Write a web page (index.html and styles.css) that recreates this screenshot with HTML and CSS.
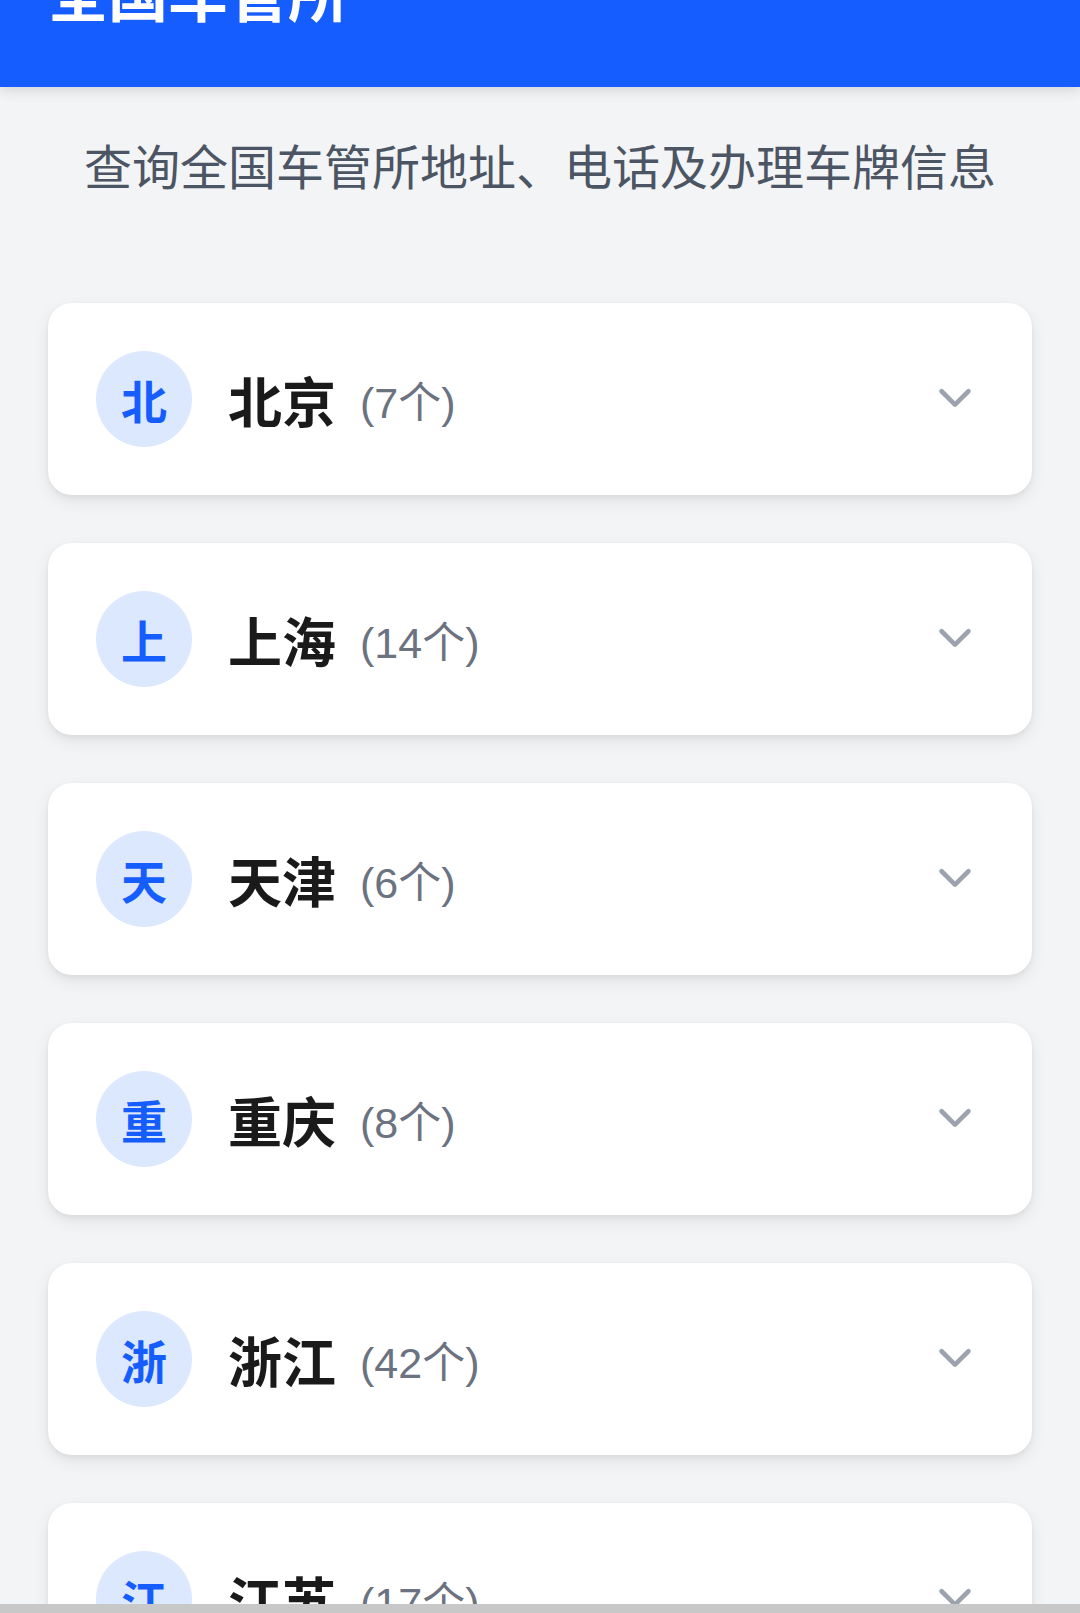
FILE: index.html
```html
<!DOCTYPE html>
<html lang="zh-CN">
<head>
  <meta charset="UTF-8">
  <title>全国车管所</title>
  <link rel="stylesheet" href="styles.css">
</head>
<body>
  <header class="topbar">
    <h1>全国车管所</h1>
  </header>

  <main class="page">
    <p class="subtitle">查询全国车管所地址、电话及办理车牌信息</p>

    <!-- 省份列表 -->
    <ul class="province-list">
      <li class="province-card">
        <span class="badge">北</span>
        <div class="province-name">北京<span class="count">(7个)</span></div>
        <svg class="chevron" viewBox="0 0 24 24" fill="none" stroke="currentColor" stroke-width="2.4" stroke-linecap="round" stroke-linejoin="round"><path d="M19 9l-7 7-7-7"/></svg>
      </li>
      <li class="province-card">
        <span class="badge">上</span>
        <div class="province-name">上海<span class="count">(14个)</span></div>
        <svg class="chevron" viewBox="0 0 24 24" fill="none" stroke="currentColor" stroke-width="2.4" stroke-linecap="round" stroke-linejoin="round"><path d="M19 9l-7 7-7-7"/></svg>
      </li>
      <li class="province-card">
        <span class="badge">天</span>
        <div class="province-name">天津<span class="count">(6个)</span></div>
        <svg class="chevron" viewBox="0 0 24 24" fill="none" stroke="currentColor" stroke-width="2.4" stroke-linecap="round" stroke-linejoin="round"><path d="M19 9l-7 7-7-7"/></svg>
      </li>
      <li class="province-card">
        <span class="badge">重</span>
        <div class="province-name">重庆<span class="count">(8个)</span></div>
        <svg class="chevron" viewBox="0 0 24 24" fill="none" stroke="currentColor" stroke-width="2.4" stroke-linecap="round" stroke-linejoin="round"><path d="M19 9l-7 7-7-7"/></svg>
      </li>
      <li class="province-card">
        <span class="badge">浙</span>
        <div class="province-name">浙江<span class="count">(42个)</span></div>
        <svg class="chevron" viewBox="0 0 24 24" fill="none" stroke="currentColor" stroke-width="2.4" stroke-linecap="round" stroke-linejoin="round"><path d="M19 9l-7 7-7-7"/></svg>
      </li>
      <li class="province-card">
        <span class="badge">江</span>
        <div class="province-name">江苏<span class="count">(17个)</span></div>
        <svg class="chevron" viewBox="0 0 24 24" fill="none" stroke="currentColor" stroke-width="2.4" stroke-linecap="round" stroke-linejoin="round"><path d="M19 9l-7 7-7-7"/></svg>
      </li>
      <li class="province-card">
        <span class="badge">广</span>
        <div class="province-name">广东<span class="count">(29个)</span></div>
        <svg class="chevron" viewBox="0 0 24 24" fill="none" stroke="currentColor" stroke-width="2.4" stroke-linecap="round" stroke-linejoin="round"><path d="M19 9l-7 7-7-7"/></svg>
      </li>
    </ul>
  </main>

  <div class="bottom-bar"></div>
</body>
</html>
```

FILE: styles.css
```css
body {
  font-family: Roboto, "Noto Sans CJK SC", sans-serif;
  background-color: #f3f4f6;
  margin: 0;
  padding: 0;
}
.topbar {
  position: relative;
  z-index: 1;
  margin-top: -93px;
  padding: 48px;
  background-color: #165dff;
  box-shadow: 0 4px 12px rgba(0, 0, 0, 0.12);
}
.topbar h1 {
  margin: 0;
  font-size: 60px;
  line-height: 84px;
  font-weight: 700;
  color: #ffffff;
}
.page {
  padding: 46px 48px 48px;
}
.subtitle {
  margin: 0 0 98px;
  text-align: center;
  font-size: 48px;
  line-height: 72px;
  color: #4b5563;
}
.province-list {
  list-style: none;
  margin: 0;
  padding: 0;
  display: flex;
  flex-direction: column;
  gap: 48px;
}
.province-card {
  display: flex;
  align-items: center;
  height: 96px;
  padding: 48px 54px 48px 48px;
  background-color: #ffffff;
  border-radius: 24px;
  box-shadow: 0 6px 16px rgba(0, 0, 0, 0.08), 0 2px 5px rgba(0, 0, 0, 0.05);
}
.badge {
  flex: none;
  display: flex;
  align-items: center;
  justify-content: center;
  width: 96px;
  height: 96px;
  border-radius: 50%;
  background-color: #dce8fe;
  color: #165dff;
  font-size: 46px;
  font-weight: 700;
}
.province-name {
  flex: 1;
  display: flex;
  align-items: center;
  margin-left: 36px;
  font-size: 54px;
  font-weight: 700;
  color: #1a1a1a;
}
.count {
  margin-left: 24px;
  font-family: "Liberation Sans", "Noto Sans CJK SC", sans-serif;
  font-size: 43px;
  font-weight: 400;
  color: #6b7280;
}
.chevron {
  flex: none;
  width: 46px;
  height: 46px;
  margin-top: -4px;
  color: #9ca3af;
}
/* 底部灰条 */
.bottom-bar {
  position: fixed;
  left: 0;
  right: 0;
  bottom: 0;
  height: 9px;
  background-color: #c8c8c8;
}
```
